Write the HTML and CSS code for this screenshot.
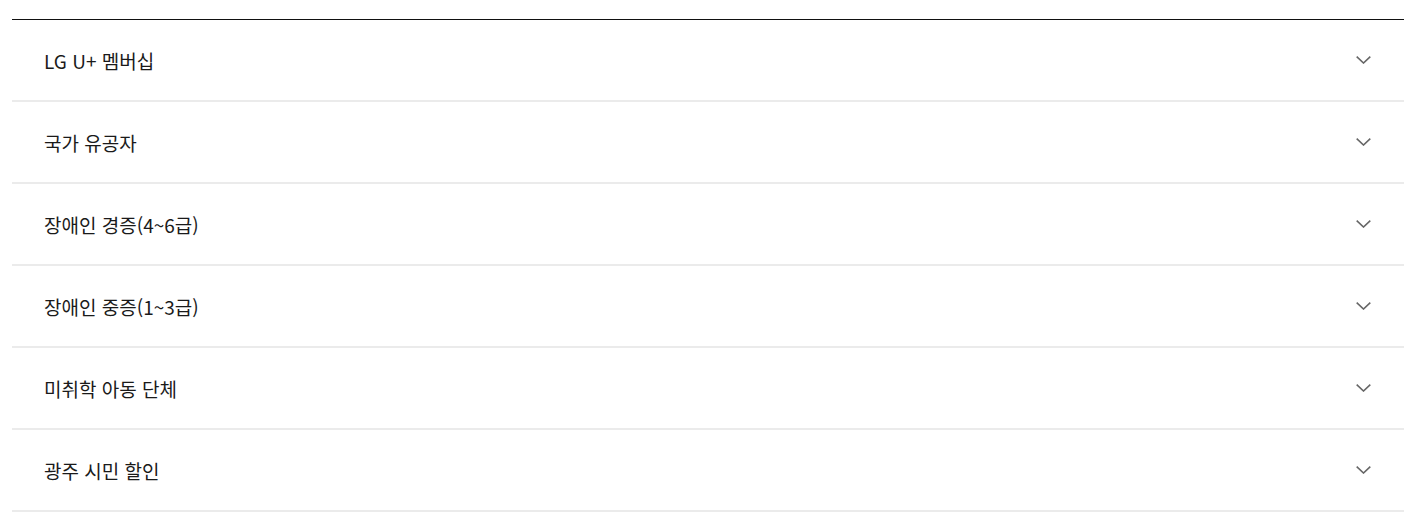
FILE: index.html
```html
<!DOCTYPE html>
<html lang="ko">
<head>
<meta charset="utf-8">
<link rel="stylesheet" href="styles.css">
</head>
<body>
<ul class="accordion">
  <li class="item"><span class="label">LG U+ 멤버십</span><svg class="chev" viewBox="0 0 15 8" width="15" height="8"><path d="M0.7 0.7 L7.5 7 L14.3 0.7" fill="none" stroke="#666" stroke-width="1.6"/></svg></li>
  <li class="item"><span class="label">국가 유공자</span><svg class="chev" viewBox="0 0 15 8" width="15" height="8"><path d="M0.7 0.7 L7.5 7 L14.3 0.7" fill="none" stroke="#666" stroke-width="1.6"/></svg></li>
  <li class="item"><span class="label">장애인 경증(4~6급)</span><svg class="chev" viewBox="0 0 15 8" width="15" height="8"><path d="M0.7 0.7 L7.5 7 L14.3 0.7" fill="none" stroke="#666" stroke-width="1.6"/></svg></li>
  <li class="item"><span class="label">장애인 중증(1~3급)</span><svg class="chev" viewBox="0 0 15 8" width="15" height="8"><path d="M0.7 0.7 L7.5 7 L14.3 0.7" fill="none" stroke="#666" stroke-width="1.6"/></svg></li>
  <li class="item"><span class="label">미취학 아동 단체</span><svg class="chev" viewBox="0 0 15 8" width="15" height="8"><path d="M0.7 0.7 L7.5 7 L14.3 0.7" fill="none" stroke="#666" stroke-width="1.6"/></svg></li>
  <li class="item"><span class="label">광주 시민 할인</span><svg class="chev" viewBox="0 0 15 8" width="15" height="8"><path d="M0.7 0.7 L7.5 7 L14.3 0.7" fill="none" stroke="#666" stroke-width="1.6"/></svg></li>
</ul>
</body>
</html>
```
FILE: styles.css
```css
html, body {
  margin: 0;
  padding: 0;
  background: #fff;
}
body {
  padding: 19px 19px 0 12px;
  font-family: "Noto Sans CJK KR", "Noto Sans", sans-serif;
  color: #1a1a1a;
}
.accordion {
  list-style: none;
  margin: 0;
  padding: 0;
  border-top: 1px solid #111;
}
.item {
  height: 80px;
  border-bottom: 2px solid #ebebeb;
  display: flex;
  align-items: center;
  justify-content: space-between;
  padding: 0 33px 0 32px;
}
.label {
  font-size: 19px;
  line-height: 1;
  letter-spacing: 0;
}
.chev {
  display: block;
}
```
